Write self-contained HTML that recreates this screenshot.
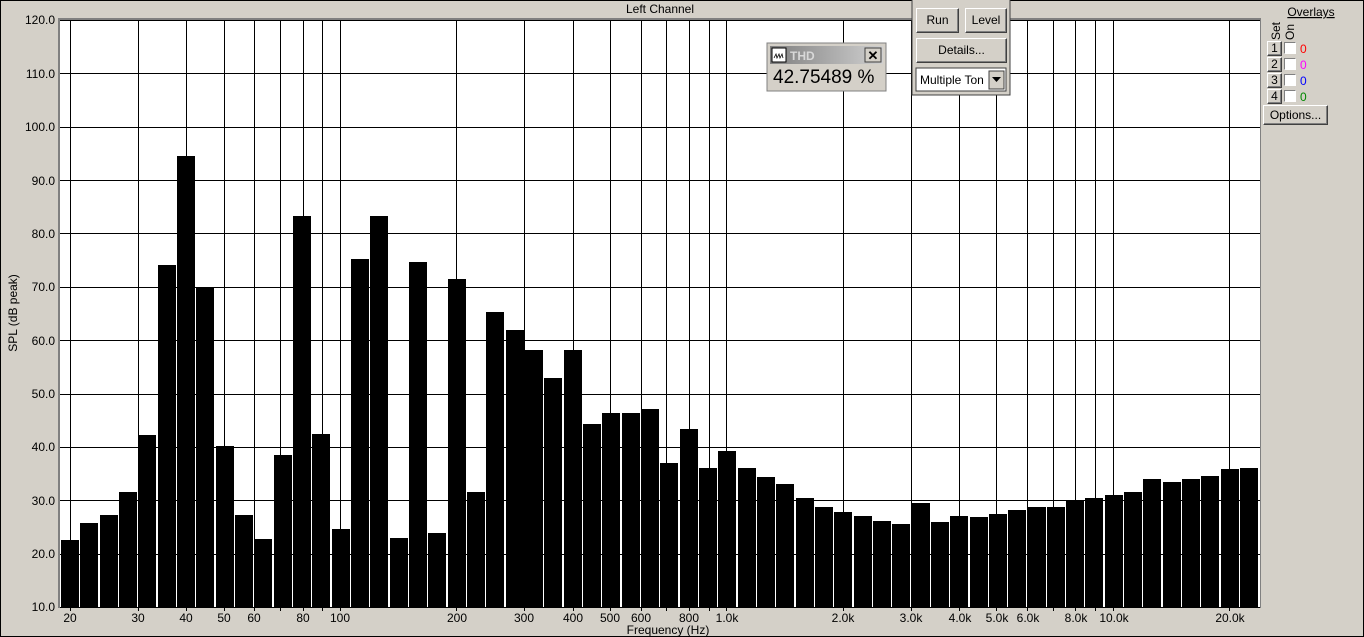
<!DOCTYPE html>
<html><head><meta charset="utf-8"><style>
body{margin:0;width:1364px;height:637px;overflow:hidden;background:#d4d0c8;font-family:"Liberation Sans",sans-serif;}
#wrap{position:absolute;left:0;top:0;width:1362px;height:635px;border:1px solid #000;background:#d4d0c8;}
svg{position:absolute;left:0;top:0}
.btn{position:absolute;background:#d4d0c8;border:1px solid;border-color:#fff #404040 #404040 #fff;box-shadow:inset -1px -1px 0 #808080;font-size:12px;text-align:center;box-sizing:border-box;}
.cb{position:absolute;width:12px;height:12px;background:#fff;border:1px solid;border-color:#808080 #fff #fff #808080;box-sizing:border-box;}
</style></head><body><div id="wrap"></div>
<svg width="1364" height="637" id="s" font-family="Liberation Sans, sans-serif" font-size="12">
<rect x="58" y="18" width="1203" height="590" fill="#808080"/>
<rect x="60" y="20" width="1200" height="587" fill="#fff"/>
<g id="grid" stroke="#000" stroke-width="1"></g>
<g id="bars" fill="#000"></g>
<text x="660" y="13" text-anchor="middle">Left Channel</text>
<g text-anchor="end" font-size="12">
<text x="55" y="24">120.0</text><text x="55" y="78">110.0</text><text x="55" y="131">100.0</text>
<text x="55" y="185">90.0</text><text x="55" y="238">80.0</text><text x="55" y="291">70.0</text>
<text x="55" y="345">60.0</text><text x="55" y="398">50.0</text><text x="55" y="451">40.0</text>
<text x="55" y="505">30.0</text><text x="55" y="558">20.0</text><text x="55" y="611">10.0</text>
</g>
<text transform="translate(17,313) rotate(-90)" text-anchor="middle">SPL (dB peak)</text>
<g text-anchor="middle" id="xl">
<text x="70" y="622">20</text><text x="138" y="622">30</text><text x="186" y="622">40</text><text x="224" y="622">50</text><text x="254" y="622">60</text><text x="303" y="622">80</text><text x="340" y="622">100</text><text x="457" y="622">200</text><text x="524" y="622">300</text><text x="573" y="622">400</text><text x="610" y="622">500</text><text x="641" y="622">600</text><text x="689" y="622">800</text><text x="727" y="622">1.0k</text><text x="843" y="622">2.0k</text><text x="911" y="622">3.0k</text><text x="960" y="622">4.0k</text><text x="997" y="622">5.0k</text><text x="1028" y="622">6.0k</text><text x="1076" y="622">8.0k</text><text x="1114" y="622">10.0k</text><text x="1230" y="622">20.0k</text>
</g>
<text x="668" y="634" text-anchor="middle">Frequency (Hz)</text>
<rect x="767" y="43" width="119" height="48" fill="#d4d0c8" stroke="#808080"/>
<defs><linearGradient id="g" x1="0" x2="1"><stop offset="0" stop-color="#808080"/><stop offset="1" stop-color="#d0d0d0"/></linearGradient></defs>
<rect x="770" y="46" width="113" height="18" fill="url(#g)"/>
<rect x="772" y="48" width="14" height="14" fill="#fff" stroke="#000"/>
<path d="M774 58 l2 -4 l1 4 l2 -4 l1 4 l2 -4 l1 4" stroke="#000" fill="none" stroke-width="0.8"/>
<text x="790" y="60" fill="#d8d8d8" font-weight="bold">THD</text>
<rect x="865" y="48" width="16" height="14" fill="#d4d0c8" stroke="#404040"/>
<text x="873" y="60" text-anchor="middle" font-weight="bold" font-size="13">✕</text>
<text x="773" y="83" font-size="19">42.75489 %</text>
<rect x="912" y="-1" width="98" height="96" fill="#d4d0c8" stroke="#404040"/>
<rect x="916" y="68" width="90" height="23" fill="#fff" stroke="#404040"/>
<text x="920" y="84">Multiple Ton</text>
<rect x="989" y="71" width="15" height="18" fill="#d4d0c8" stroke="#404040"/>
<path d="M992 77 h9 l-4.5 5z" fill="#000"/>
<text x="1311" y="16" text-anchor="middle" text-decoration="underline">Overlays</text>
<text transform="translate(1280,40) rotate(-90)">Set</text>
<text transform="translate(1294,40) rotate(-90)">On</text>
<g font-size="12">
<text x="1300" y="53" fill="#f00">0</text>
<text x="1300" y="69" fill="#f0f">0</text>
<text x="1300" y="85" fill="#00f">0</text>
<text x="1300" y="101" fill="#080">0</text>
</g>
</svg>
<div class="btn" style="left:916px;top:8px;width:43px;height:25px;line-height:23px">Run</div>
<div class="btn" style="left:965px;top:8px;width:42px;height:25px;line-height:23px">Level</div>
<div class="btn" style="left:916px;top:38px;width:91px;height:25px;line-height:23px">Details...</div>
<div class="btn" style="left:1267px;top:41px;width:15px;height:15px;line-height:13px">1</div>
<div class="btn" style="left:1267px;top:57px;width:15px;height:15px;line-height:13px">2</div>
<div class="btn" style="left:1267px;top:73px;width:15px;height:15px;line-height:13px">3</div>
<div class="btn" style="left:1267px;top:89px;width:15px;height:15px;line-height:13px">4</div>
<div class="cb" style="left:1284px;top:42px"></div>
<div class="cb" style="left:1284px;top:58px"></div>
<div class="cb" style="left:1284px;top:74px"></div>
<div class="cb" style="left:1284px;top:90px"></div>
<div class="btn" style="left:1263px;top:105px;width:65px;height:20px;line-height:18px">Options...</div>
<script>
var ns="http://www.w3.org/2000/svg";
var g=document.getElementById("grid"),b=document.getElementById("bars");
function L(x1,y1,x2,y2){var l=document.createElementNS(ns,"line");l.setAttribute("x1",x1);l.setAttribute("y1",y1);l.setAttribute("x2",x2);l.setAttribute("y2",y2);g.appendChild(l);}
for(var i=0;i<=11;i++){var y=Math.round(20+i*53.36)+0.5;L(60,y,1260,y);}
var fs=[20,30,40,50,60,70,80,90,100,200,300,400,500,600,700,800,900,1000,2000,3000,4000,5000,6000,7000,8000,9000,10000,20000];
fs.forEach(function(f){var x=Math.round(70+386.3*Math.log10(f/20))+0.5;L(x,20,x,607);L(x,607,x,611);});
var h=[22.5,25.8,27.2,31.6,42.3,74,94.5,70,40.2,27.3,22.8,38.5,83.2,42.5,24.7,75.2,83.2,23,74.6,23.9,71.5,31.6,65.2,62,58.2,52.9,58.2,44.3,46.3,46.3,47.2,36.9,43.3,36.1,39.3,36.1,34.4,33.1,30.4,28.8,27.8,27.1,26.1,25.6,29.4,25.9,27.1,26.9,27.5,28.2,28.8,28.8,29.9,30.4,30.9,31.5,33.9,33.5,33.9,34.6,35.9,36.1];
h.forEach(function(v,i){var x=Math.round(61+i*19.33),y=Math.round(607-(v-10)*5.336);var r=document.createElementNS(ns,"rect");r.setAttribute("x",x);r.setAttribute("y",y);r.setAttribute("width",18);r.setAttribute("height",607-y);b.appendChild(r);});
</script>
</body></html>
